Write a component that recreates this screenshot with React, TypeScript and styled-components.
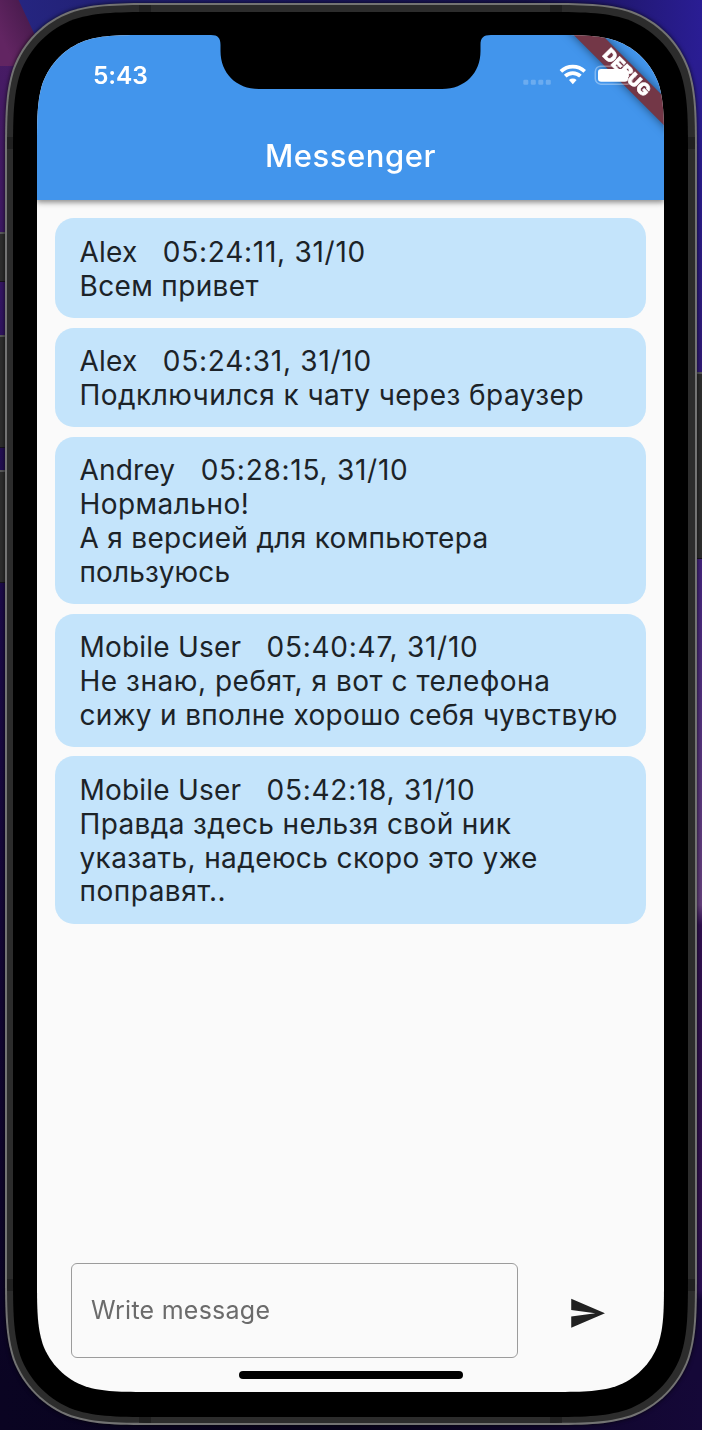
import React from "react";
import styled, { createGlobalStyle } from "styled-components";

/** Rounded rectangle with continuous-curvature corners, as a CSS path string. */
function squircle(w: number, h: number, r: number): string {
  const a = 1.52866483 * r;
  const b = 1.08849296 * r;
  const c = 0.86840694 * r;
  const d = 0.63149379 * r;
  const e = 0.07491139 * r;
  const f = 0.37282383 * r;
  const g = 0.16905956 * r;
  return [
    `M${a} 0 L${w - a} 0`,
    `C${w - b} 0 ${w - c} 0 ${w - d} ${e}`,
    `C${w - f} ${g} ${w - g} ${f} ${w - e} ${d}`,
    `C${w} ${c} ${w} ${b} ${w} ${a}`,
    `L${w} ${h - a}`,
    `C${w} ${h - b} ${w} ${h - c} ${w - e} ${h - d}`,
    `C${w - g} ${h - f} ${w - f} ${h - g} ${w - d} ${h - e}`,
    `C${w - c} ${h} ${w - b} ${h} ${w - a} ${h}`,
    `L${a} ${h}`,
    `C${b} ${h} ${c} ${h} ${d} ${h - e}`,
    `C${f} ${h - g} ${g} ${h - f} ${e} ${h - d}`,
    `C0 ${h - c} 0 ${h - b} 0 ${h - a}`,
    `L0 ${a}`,
    `C0 ${b} 0 ${c} ${e} ${d}`,
    `C${g} ${f} ${f} ${g} ${d} ${e}`,
    `C${c} 0 ${b} 0 ${a} 0 Z`,
  ].join(" ");
}

const GlobalStyle = createGlobalStyle`
  *, *::before, *::after { box-sizing: border-box; }
  body { margin: 0; overflow: hidden; background: #120732; }
`;

const Desktop = styled.main`
  position: relative;
  width: 702px;
  height: 1430px;
  padding: 3px 5px 5px;
  overflow: hidden;
  font-family: Inter, "Liberation Sans", sans-serif;
  background:
    linear-gradient(245deg, transparent 28px, #4c1c50 29px, #622562 60px) no-repeat 0 0 / 50px 66px,
    linear-gradient(90deg, #262682 0, #1a165c 45%, #17124c 75%, #2a1d94 100%) no-repeat 0 0 / 702px 60px,
    linear-gradient(90deg, #0a0422, #08031c 50%, #150838) no-repeat 0 1380px / 702px 50px,
    linear-gradient(#2a1d94 0, #2a1c88 200px, #301b74 370px, #43247a 560px, #633f7a 905px, #30104f 925px, #32114f 1200px, #2a0f52 1290px, #150838 1300px) no-repeat 640px 0 / 62px 1430px,
    linear-gradient(#4a1c66 0, #401a62 200px, #331562 300px, #230f52 450px, #1c0b48 600px, #120632 1000px, #0a0422 1400px) no-repeat 0 0 / 62px 1430px;
`;

const SideButton = styled.span<{ $side: "left" | "right"; $top: number; $height: number }>`
  position: absolute;
  ${({ $side }) => $side}: 0;
  top: ${({ $top }) => $top}px;
  width: 6px;
  height: ${({ $height }) => $height}px;
  background: #2d2d2d;
  border-top: 2px solid #58585a;
  border-bottom: 1px solid #17131c;
`;

const PhoneShadow = styled.div`
  position: relative;
  filter: drop-shadow(0 0 2px rgba(0, 0, 0, 0.75));
`;

const PhoneEdge = styled.div`
  width: 692px;
  height: 1422px;
  padding: 2px;
  background: #737373;
  clip-path: path("${squircle(692, 1422, 104)}");
`;

/* Steel band; the small darker patches are the antenna breaks. */
const PhoneBand = styled.div`
  width: 688px;
  height: 1418px;
  padding: 7px 6.5px 6px 6px;
  background:
    linear-gradient(90deg, transparent 132px, #202020 132px 144px, transparent 144px 543px, #202020 543px 555px, transparent 555px),
    linear-gradient(transparent 132px, #202020 132px 144px, transparent 144px 1274px, #202020 1274px 1286px, transparent 1286px),
    #2c2c2c;
  clip-path: path("${squircle(688, 1418, 102)}");
`;

const Bezel = styled.div`
  width: 675px;
  height: 1405px;
  padding: 23px 24px 25px;
  background: #000;
  clip-path: path("${squircle(675, 1405, 97)}");
`;

const Screen = styled.div`
  display: flex;
  flex-direction: column;
  width: 627px;
  height: 1357px;
  background: #fafafa;
  clip-path: path("${squircle(627, 1357, 76)}");
`;

const AppBar = styled.header`
  position: relative;
  z-index: 1;
  flex: none;
  display: flex;
  flex-direction: column;
  height: 165.4px;
  color: #fff;
  background: #4295ec;
  box-shadow: 0 3px 6px rgba(0, 0, 0, 0.28), 0 2px 4px rgba(0, 0, 0, 0.2);
`;

const Notch = styled.svg`
  position: absolute;
  left: 174px;
  top: 0;
  width: 280px;
  height: 55px;
  fill: #000;
`;

const StatusBar = styled.div`
  display: flex;
  align-items: center;
  justify-content: space-between;
  height: 76px;
  padding: 3px 25.5px 0 56px;
`;

const Clock = styled.time`
  font-size: 24.5px;
  font-weight: 600;
  line-height: 30px;
  letter-spacing: -0.1px;
`;

const StatusIcons = styled.div`
  position: relative;
  z-index: 2;
  display: flex;
  align-items: center;
`;

const Title = styled.h1`
  margin: 25px 0 0;
  text-align: center;
  font-size: 31px;
  font-weight: 500;
  line-height: 40px;
  letter-spacing: 0.55px;
`;

const Ribbon = styled.div`
  position: absolute;
  z-index: 1;
  left: 505px;
  top: 29.3px;
  width: 170px;
  height: 19.5px;
  transform: rotate(45deg);
  background: #733747;
  box-shadow: 0 0 10px rgba(0, 0, 0, 0.5);
`;

const RibbonLabel = styled(Ribbon)`
  z-index: 3;
  background: none;
  box-shadow: none;
  text-align: center;
  text-indent: -2px;
  font-size: 17px;
  font-weight: 900;
  line-height: 19.5px;
  -webkit-text-stroke: 0.5px #fff;
`;

const MessageList = styled.ol`
  flex: 1;
  display: flex;
  flex-direction: column;
  gap: 9.6px;
  margin: 0;
  padding: 18px 18px 0;
  list-style: none;
`;

const Bubble = styled.li`
  padding: 17.6px 24.5px 14.4px;
  border-radius: 19px;
  background: #c4e4fb;
  color: #1c2328;
  font-size: 28px;
  line-height: 33.8px;
  white-space: pre;
`;

const Meta = styled.div`
  display: flex;
  gap: 25.4px;
`;

const Author = styled.span`
  letter-spacing: 0.2px;
`;

const Sent = styled.time`
  letter-spacing: 0.74px;
`;

const Line = styled.div<{ $spacing: number }>`
  letter-spacing: ${({ $spacing }) => $spacing}px;
`;

const Composer = styled.footer`
  flex: none;
  display: flex;
  align-items: center;
  gap: 50.3px;
  height: 95px;
  margin-bottom: 13px;
  padding-left: 34px;
`;

const MessageField = styled.input`
  width: 447px;
  height: 95px;
  padding: 0 19px 2px;
  border: 1.5px solid #9c9c9c;
  border-radius: 6px;
  outline: none;
  background: transparent;
  color: #1c2328;
  font: 400 25px/30px Inter, "Liberation Sans", sans-serif;
  letter-spacing: 0.25px;
  &::placeholder {
    color: #6b6b6b;
    opacity: 1;
  }
`;

const SendButton = styled.button`
  display: flex;
  padding: 5px 0 0;
  border: 0;
  background: none;
  color: #212121;
`;

const HomeIndicator = styled.div`
  flex: none;
  align-self: center;
  width: 224px;
  height: 8px;
  margin-bottom: 13px;
  border-radius: 4px;
  background: #000;
`;

type Message = { author: string; sent: string; lines: [string, number][] };

/* Each line carries its own tracking in pixels. */
const messages: Message[] = [
  { author: "Alex", sent: "05:24:11, 31/10", lines: [["Всем привет", 0.35]] },
  { author: "Alex", sent: "05:24:31, 31/10", lines: [["Подключился к чату через браузер", 0.45]] },
  {
    author: "Andrey",
    sent: "05:28:15, 31/10",
    lines: [
      ["Нормально!", 0.45],
      ["А я версией для компьютера", 0.31],
      ["пользуюсь", 0.15],
    ],
  },
  {
    author: "Mobile User",
    sent: "05:40:47, 31/10",
    lines: [
      ["Не знаю, ребят, я вот с телефона", 0.53],
      ["сижу и вполне хорошо себя чувствую", 0.34],
    ],
  },
  {
    author: "Mobile User",
    sent: "05:42:18, 31/10",
    lines: [
      ["Правда здесь нельзя свой ник", 0.37],
      ["указать, надеюсь скоро это уже", 0.38],
      ["поправят..", 0.5],
    ],
  },
];

const StatusGlyphs = () => (
  <svg width="116" height="24" viewBox="0 0 116 24" fill="#fff">
    <g opacity="0.22">
      <rect x="0.3" y="16.8" width="5" height="5" rx="1.3" />
      <rect x="7.8" y="16.8" width="5" height="5" rx="1.3" />
      <rect x="15.3" y="16.8" width="5" height="5" rx="1.3" />
      <rect x="22.8" y="16.8" width="5" height="5" rx="1.3" />
    </g>
    <g fill="none" stroke="#fff" strokeWidth="3.7">
      <path d="M37.900 8.400a17.300 17.300 0 0 1 23.800 0" />
      <path d="M42.200 13.200a11 11 0 0 1 15.200 0" />
    </g>
    <path d="M46 17a5.600 5.600 0 0 1 7.600 0L49.800 21.300z" />
    <rect x="72.300" y="3.200" width="37.500" height="18" rx="5.500" fill="none" stroke="#fff" strokeOpacity="0.35" strokeWidth="1.500" />
    <path d="M112 9.500c2.200 1 2.200 5 0 6z" opacity="0.2" />
    <rect x="75" y="5.900" width="30" height="12.800" rx="3.200" />
  </svg>
);

export default function App() {
  return (
    <>
      <GlobalStyle />
      <Desktop>
        <SideButton $side="left" $top={232} $height={50} />
        <SideButton $side="left" $top={335} $height={113} />
        <SideButton $side="left" $top={470} $height={113} />
        <SideButton $side="right" $top={372} $height={187} />
        <PhoneShadow>
          <PhoneEdge>
            <PhoneBand>
              <Bezel>
                <Screen>
                  <AppBar>
                    <StatusBar>
                      <Clock>5:43</Clock>
                      <StatusIcons>
                        <StatusGlyphs />
                      </StatusIcons>
                    </StatusBar>
                    <Title>Messenger</Title>
                    <Notch viewBox="0 0 280 55">
                      <path d="M0 0C7 0 9.500 3 9.500 10V16C9.500 38 25 54 48 54H231C254 54 269.500 38 269.500 16V10C269.500 3 272 0 280 0Z" />
                    </Notch>
                    <Ribbon />
                    <RibbonLabel>DEBUG</RibbonLabel>
                  </AppBar>
                  <MessageList>
                    {messages.map((message) => (
                      <Bubble key={message.sent}>
                        <Meta>
                          <Author>{message.author}</Author>
                          <Sent>{message.sent}</Sent>
                        </Meta>
                        {message.lines.map(([text, spacing]) => (
                          <Line key={text} $spacing={spacing}>
                            {text}
                          </Line>
                        ))}
                      </Bubble>
                    ))}
                  </MessageList>
                  <Composer>
                    <MessageField placeholder="Write message" />
                    <SendButton aria-label="Send">
                      <svg width="38.6" height="38.6" viewBox="0 0 24 24" fill="currentColor">
                        <path d="M2.010 21L23 12 2.010 3 2 10l15 2-15 2z" />
                      </svg>
                    </SendButton>
                  </Composer>
                  <HomeIndicator />
                </Screen>
              </Bezel>
            </PhoneBand>
          </PhoneEdge>
        </PhoneShadow>
      </Desktop>
    </>
  );
}
